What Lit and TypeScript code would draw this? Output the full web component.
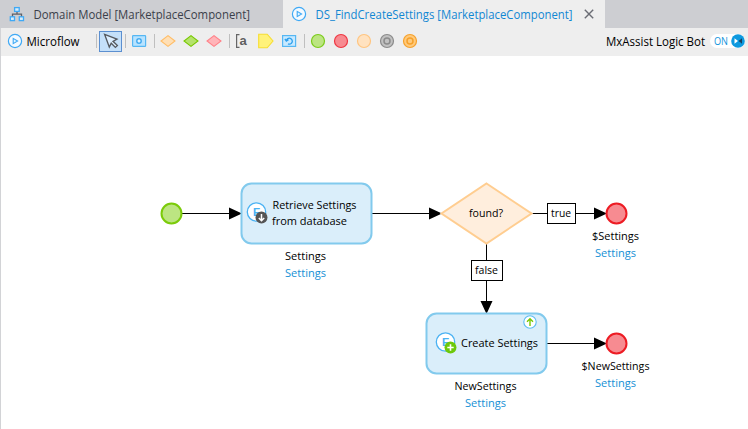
import { LitElement, html, svg, css } from "lit";
import { customElement } from "lit/decorators.js";

const icon = (body: unknown, size = 16) =>
  html`<svg class="icon" width=${size} height=${size} viewBox="0 0 ${size} ${size}">${body}</svg>`;

const play = () => icon(svg`
  <circle cx="8" cy="8" r="6.6" fill="#f4faff" stroke="#3fa9f5" stroke-width="1.2"/>
  <path d="M6.2 5.4 L10.6 8 L6.2 10.6 Z" fill="#e3f4ff" stroke="#3fa9f5" stroke-width="1.1"/>`);
const diamond = (fill: string, stroke: string) =>
  icon(svg`<path d="M8 2.6 L15 8 L8 13.4 L1 8 Z" fill=${fill} stroke=${stroke} stroke-width="1.1"/>`);
const dot = (fill: string, stroke: string, ring = false) => icon(svg`
  <circle cx="8" cy="8" r="6.5" fill=${fill} stroke=${stroke} stroke-width="1.2"/>
  ${ring ? svg`<circle cx="8" cy="8" r="3" fill="none" stroke=${stroke} stroke-width="1.5"/>` : ""}`);

@customElement("tab-bar")
class TabBar extends LitElement {
  static styles = css`
    :host { display: flex; height: 28px; background: #cdced2; }
    .tab { display: flex; align-items: center; box-sizing: border-box; height: 28px; color: #3b3f4a; white-space: pre; }
    .first { width: 283px; padding-left: 9px; gap: 8px; }
    .active { width: 322px; padding-left: 8px; gap: 8px; background: #eeeeee; color: #1187d3; }
    .close { margin-left: 0; }
    svg { display: block; flex: none; overflow: visible; }
    text { font: 12px "Open Sans", sans-serif; fill: currentColor; }
  `;
  render() {
    return html`
      <div class="tab first">
        ${icon(svg`<g fill="#d9edfa" stroke="#3fa9f5" stroke-width="1.3">
          <path d="M8 5.5V8.2M3.5 11V8.2H12.5V11" fill="none" stroke="#5d6068"/>
          <rect x="5.6" y="1.6" width="4.6" height="3.8"/>
          <rect x="1.3" y="10.8" width="4.2" height="3.8"/>
          <rect x="10.3" y="10.8" width="4.2" height="3.8"/></g>`)}
        <svg width="222" height="20"><text x="0.5" y="15" textLength="216.5" lengthAdjust="spacingAndGlyphs">Domain Model [MarketplaceComponent]</text></svg>
      </div>
      <div class="tab active">
        ${play()}
        <svg width="261" height="20"><text x="0.5" y="15" textLength="257" lengthAdjust="spacingAndGlyphs">DS_FindCreateSettings [MarketplaceComponent]</text></svg>
        <svg class="close" width="10" height="10"><path d="M.8 .8L9.2 9.2M9.2 .8L.8 9.2" stroke="#6a6c74" stroke-width="1.4"/></svg>
      </div>`;
  }
}

@customElement("tool-bar")
class ToolBar extends LitElement {
  static styles = css`
    :host { display: flex; align-items: center; height: 28px; box-sizing: border-box; padding: 0 3px 2px 6px; background: #eeeeee; border-left: 1px solid #d2d3d6; color: #000; }
    .title { display: flex; align-items: center; gap: 3px; width: 82px; }
    .sep { flex: none; width: 1px; height: 14px; background: #bfbfbf; margin: 0 5px 0 7px; }
    .set { display: flex; gap: 7px; }
    .picked { box-sizing: border-box; flex: none; width: 23px; height: 21px; margin: 0 -4px 0 -3px; border: 1px solid #5b8fd0; background: #c5e0f9; display: flex; align-items: center; justify-content: center; }
    svg { display: block; flex: none; overflow: visible; }
    .space { flex: 1; }
    .toggle { display: flex; align-items: center; box-sizing: border-box; width: 35px; height: 14px; margin-left: 1px; border-radius: 7px; background: #fff; }
    text { font: 12px "Open Sans", sans-serif; }
    .on { font-size: 10.5px; fill: #1194dc; }
    .note { font: bold 13px "Liberation Sans", sans-serif; fill: #5f5f5f; }
  `;
  render() {
    return html`
      <div class="title">${play()}<svg width="56" height="20"><text x="0.5" y="15" textLength="53" lengthAdjust="spacingAndGlyphs">Microflow</text></svg></div>
      <div class="sep"></div>
      <div class="picked"><svg width="18" height="18"><path d="M2.6 2.3 L15 7.2 L11 9.3 L15.4 13.6 L13.4 15.4 L9.2 11.2 L7.3 15 Z" fill="#dceeff" stroke="#55595f" stroke-width="1.3"/></svg></div>
      <div class="sep"></div>
      <div class="set">${icon(svg`<rect x="1.6" y="2.6" width="13" height="10.8" rx=".7" fill="#b8e3ff" stroke="#56b7f3" stroke-width="1.2"/><rect x="5.9" y="5.9" width="4.2" height="4.2" rx="1.4" fill="#e2f4ff" stroke="#2da0ee" stroke-width="1.3"/>`)}</div>
      <div class="sep"></div>
      <div class="set">
        ${diamond("#ffdfb5", "#ffbd66")}${diamond("#b5e26c", "#78c800")}${diamond("#ffb4b8", "#ff8188")}
      </div>
      <div class="sep"></div>
      <div class="set">
        ${icon(svg`<path d="M4.5 1.7H1.6V14.3H4.5" fill="none" stroke="#666" stroke-width="1.2"/><text class="note" x="4.6" y="11.8">a</text>`)}
        ${icon(svg`<path d="M.7 1.2H9.2L15 8L9.2 14.8H.7Z" fill="#fff27a" stroke="#f7de31" stroke-width="1.1"/>`)}
        ${icon(svg`<rect x="1.6" y="2.6" width="13" height="10.8" fill="#c7e9ff" stroke="#56b7f3" stroke-width="1.2"/><path d="M5.4 7.5A3 3 0 1 1 7 10.9M3.9 6L5.4 8.1L7.5 6.8" fill="none" stroke="#2da0ee" stroke-width="1.3"/>`)}
      </div>
      <div class="sep"></div>
      <div class="set">
        ${dot("#bce582", "#7bcb1b")}${dot("#f78b91", "#ef3742")}${dot("#ffe2c0", "#ffc580")}${dot("#c1c1c1", "#8b8b8b", true)}${dot("#ffca7c", "#f6a12b", true)}
      </div>
      <div class="space"></div>
      <svg width="104" height="20"><text x="1" y="15" textLength="99" lengthAdjust="spacingAndGlyphs">MxAssist Logic Bot</text></svg>
      <div class="toggle"><svg width="35" height="14"><text class="on" x="4" y="11" textLength="14" lengthAdjust="spacingAndGlyphs">ON</text><circle cx="28" cy="7" r="6.8" fill="#0d99df"/><path d="M24.5 4.3L28 7L24.5 9.7Z" fill="#fff"/><path d="M32 4.3L28.7 7L32 9.7Z" fill="#173f5b"/></svg></div>`;
  }
}

@customElement("flow-canvas")
class FlowCanvas extends LitElement {
  static styles = css`
    :host { display: block; box-sizing: border-box; height: 373px; background: #fff; border-left: 1px solid #d2d3d6; }
    svg { display: block; margin-left: -1px; }
    text { font: 11.5px "Open Sans", sans-serif; fill: #000; }
    .entity { fill: #1590d5; }
    .badge { font: bold 11px "Liberation Sans", sans-serif; fill: #4ab2f3; }
    .wire { stroke: #000; stroke-width: 1; shape-rendering: crispEdges; }
    .box { fill: #fff; stroke: #000; shape-rendering: crispEdges; }
    .task { fill: #daeefa; stroke: #82caed; stroke-width: 2; }
    .end { fill: #f78b91; stroke: #ed1c24; stroke-width: 2; }
  `;
  private label(x: number, y: number, w: number, t: string, cls = "") {
    return svg`<text class=${cls} x=${x} y=${y} textLength=${w} lengthAdjust="spacingAndGlyphs">${t}</text>`;
  }
  private entity(x: number, y: number) {
    return svg`<circle cx=${x} cy=${y} r="9.2" fill="#fff" stroke="#4ab2f3" stroke-width="1.3"/><text class="badge" x=${x - 3.5} y=${y + 3.8}>E</text>`;
  }
  render() {
    return html`<svg width="748" height="373" viewBox="0 56 748 373">
      <path class="wire" d="M181 213.5H232M371 213.5H432M530 213.5H597M486.5 243V306M546 343.5H597" fill="none"/>
      <path d="M229 207.5L242 213.5L229 219.5ZM429 207.5L442 213.5L429 219.5ZM594 207.5L607 213.5L594 219.5ZM594 337.5L607 343.5L594 349.5ZM480.5 301L486.5 314L492.5 301Z"/>
      <circle cx="171.5" cy="213.5" r="10" fill="#bce582" stroke="#7bcb0a" stroke-width="2"/>
      <circle class="end" cx="616.5" cy="213.5" r="10"/>
      <circle class="end" cx="616.5" cy="343.5" r="10"/>
      <rect class="task" x="241.5" y="183.5" width="130" height="60" rx="10"/>
      <rect class="task" x="426.5" y="313.5" width="120" height="60" rx="10"/>
      <path d="M486.5 183.5L531.5 213.5L486.5 243.5L441.5 213.5Z" fill="#ffeedd" stroke="#ffcd90" stroke-width="2"/>
      <rect class="box" x="547.5" y="203.5" width="28" height="20"/>
      <rect class="box" x="471.5" y="260.5" width="31" height="20"/>
      ${this.entity(256.5, 212)}
      <circle cx="261.5" cy="217.5" r="6" fill="#555"/>
      <path d="M261.5 214V220.5M258.8 218L261.5 220.7L264.2 218" fill="none" stroke="#fff" stroke-width="1.5"/>
      ${this.entity(445.5, 342)}
      <circle cx="450.5" cy="347.5" r="6" fill="#6dc80b"/>
      <path d="M450.5 344.3V350.7M447.3 347.5H453.7" stroke="#fff" stroke-width="1.6"/>
      <circle cx="530" cy="322" r="6.2" fill="#fff" stroke="#5cbcf3" stroke-width="1.1"/>
      <path d="M530 326V319M527 321.8L530 318.8L533 321.8" fill="none" stroke="#78c800" stroke-width="1.4"/>
      ${this.label(272.5, 209, 84, "Retrieve Settings")}
      ${this.label(272, 225, 75, "from database")}
      ${this.label(285, 260, 41, "Settings")}
      ${this.label(285, 277, 41, "Settings", "entity")}
      ${this.label(469, 217, 34, "found?")}
      ${this.label(551, 217, 20, "true")}
      ${this.label(475, 274, 23, "false")}
      ${this.label(592, 240, 47, "$Settings")}
      ${this.label(595, 257, 41, "Settings", "entity")}
      ${this.label(461, 347, 77, "Create Settings")}
      ${this.label(454.5, 390, 62, "NewSettings")}
      ${this.label(465, 407, 41, "Settings", "entity")}
      ${this.label(581.5, 370, 68, "$NewSettings")}
      ${this.label(595, 387, 41, "Settings", "entity")}
    </svg>`;
  }
}

@customElement("app-root")
class AppRoot extends LitElement {
  static styles = css`
    :host { display: block; width: 748px; height: 429px; overflow: hidden; background: #fff; }
  `;
  render() {
    return html`<tab-bar></tab-bar><tool-bar></tool-bar><flow-canvas></flow-canvas>`;
  }
}
